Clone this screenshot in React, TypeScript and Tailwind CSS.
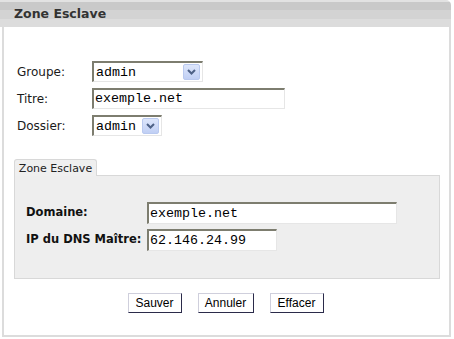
import React from "react";

const inset =
  "border-t-2 border-l-2 border-r border-b border-t-[#7d7d6f] border-l-[#7d7d6f] border-r-[#e6e6e6] border-b-[#e6e6e6] bg-white";

function Arrow() {
  return (
    <div className="absolute right-[2px] top-[1px] w-[17px] h-[16px] rounded-[2px] border border-[#b9c9ef] bg-[linear-gradient(to_bottom,#dde6fb,#c0cff4)] flex items-center justify-center">
      <svg width="9" height="6" viewBox="0 0 9 6">
        <path d="M1 1 L4.5 4.5 L8 1" stroke="#4d6186" strokeWidth="2" fill="none" />
      </svg>
    </div>
  );
}

function Select({ value, w }: { value: string; w: string }) {
  return (
    <div className={`relative h-[21px] ${w} ${inset}`}>
      <div className="pl-[2px] pt-[1px] text-[13.33px] leading-[17px] text-black" style={{ fontFamily: '"Liberation Mono", monospace' }}>
        {value}
      </div>
      <Arrow />
    </div>
  );
}

function Input({ value, w, h = "h-[21px]" }: { value: string; w: string; h?: string }) {
  return (
    <div className={`${h} ${w} ${inset} flex items-center`}>
      <span className="pl-[1px] text-[13.33px] leading-none text-black" style={{ fontFamily: '"Liberation Mono", monospace' }}>
        {value}
      </span>
    </div>
  );
}

function Btn({ label, w }: { label: string; w: string }) {
  return (
    <div
      className={`h-[20px] ${w} bg-white border border-t-[#cfcfdc] border-l-[#cfcfdc] border-r-[#2b2b4a] border-b-[#2b2b4a] flex items-center justify-center text-[12px] text-black`}
      style={{ fontFamily: '"Liberation Sans", Arial, sans-serif' }}
    >
      {label}
    </div>
  );
}

export default function App() {
  return (
    <div className="w-[454px] h-[339px] bg-white" style={{ fontFamily: '"DejaVu Sans", Verdana, sans-serif' }}>
      <div className="w-[451px]">
        <div className="h-[27px] rounded-tr-[5px] bg-[linear-gradient(to_bottom,#e2e2e2_0px,#e2e2e2_2px,#c9c9c9_2px,#c9c9c9_10px,#d3d3d3_10px,#d3d3d3_19px,#dcdcdc_19px,#dcdcdc_27px)] flex items-center pl-[14px]">
          <span className="text-[12.5px] font-bold text-[#333] leading-none pt-[1px]">Zone Esclave</span>
        </div>
        <div className="ml-[2px] w-[449px] h-[310px] border-l-2 border-r-2 border-b-2 border-[#dcdcdc] flex flex-col">
          <div className="mt-[34px] pl-[13px] flex flex-col gap-[6px]">
            <div className="flex items-center h-[21px]">
              <div className="w-[75px] text-[12px] text-[#1a1a1a]">Groupe:</div>
              <Select value="admin" w="w-[111px]" />
            </div>
            <div className="flex items-center h-[21px]">
              <div className="w-[75px] text-[12px] text-[#1a1a1a]">Titre:</div>
              <Input value="exemple.net" w="w-[193px]" />
            </div>
            <div className="flex items-center h-[21px]">
              <div className="w-[75px] text-[12px] text-[#1a1a1a]">Dossier:</div>
              <Select value="admin" w="w-[70px]" />
            </div>
          </div>
          <div className="mt-[23px] ml-[10px] w-[426px]">
            <div className="flex">
              <div className="h-[17px] w-[83px] rounded-t-[3px] border border-b-0 border-[#d8d8d8] bg-[#efefef] flex items-center justify-center text-[11px] text-[#222] leading-none">
                Zone Esclave
              </div>
            </div>
            <div className="-mt-px h-[104px] border border-[#d8d8d8] bg-[#eeeeee] pt-[26px] pl-[11px] flex flex-col gap-[5px]">
              <div className="flex items-center h-[22px]">
                <div className="w-[121px] text-[11.5px] font-bold text-[#111]">Domaine:</div>
                <Input value="exemple.net" w="w-[250px]" h="h-[22px]" />
              </div>
              <div className="flex items-center h-[22px]">
                <div className="w-[121px] text-[11.5px] font-bold text-[#111] whitespace-nowrap">IP du DNS Maître:</div>
                <Input value="62.146.24.99" w="w-[130px]" h="h-[22px]" />
              </div>
            </div>
          </div>
          <div className="mt-[14px] flex justify-center gap-[16px] pr-[2px]">
            <Btn label="Sauver" w="w-[54px]" />
            <Btn label="Annuler" w="w-[56px]" />
            <Btn label="Effacer" w="w-[54px]" />
          </div>
        </div>
      </div>
    </div>
  );
}
